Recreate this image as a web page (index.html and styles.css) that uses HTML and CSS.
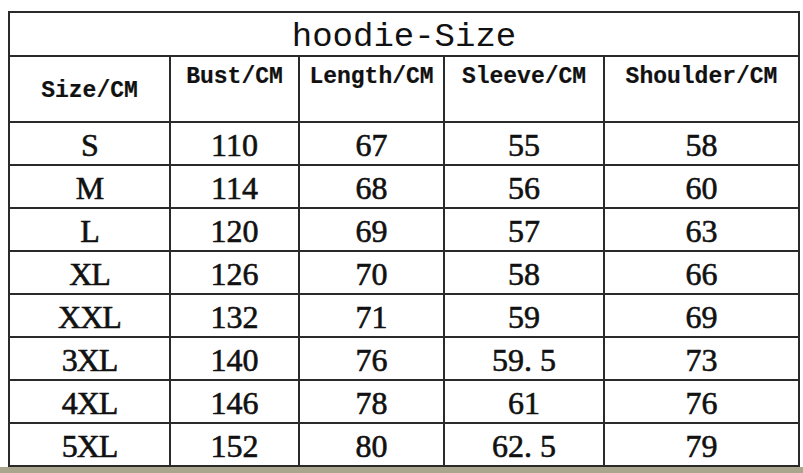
FILE: index.html
```html
<!DOCTYPE html>
<html>
<head>
<meta charset="utf-8">
<link rel="stylesheet" href="styles.css">
</head>
<body>
<div class="page">
  <table class="chart">
    <colgroup>
      <col class="c1"><col class="c2"><col class="c3"><col class="c4"><col class="c5">
    </colgroup>
    <tr class="title-row"><td colspan="5" class="title">hoodie-Size</td></tr>
    <tr class="head-row">
      <th class="head mid">Size/CM</th>
      <th class="head">Bust/CM</th>
      <th class="head">Length/CM</th>
      <th class="head">Sleeve/CM</th>
      <th class="head">Shoulder/CM</th>
    </tr>
    <tr><td class="size">S</td><td>110</td><td>67</td><td>55</td><td>58</td></tr>
    <tr><td class="size">M</td><td>114</td><td>68</td><td>56</td><td>60</td></tr>
    <tr><td class="size">L</td><td>120</td><td>69</td><td>57</td><td>63</td></tr>
    <tr><td class="size">XL</td><td>126</td><td>70</td><td>58</td><td>66</td></tr>
    <tr><td class="size">XXL</td><td>132</td><td>71</td><td>59</td><td>69</td></tr>
    <tr><td class="size">3XL</td><td>140</td><td>76</td><td>59. 5</td><td>73</td></tr>
    <tr><td class="size">4XL</td><td>146</td><td>78</td><td>61</td><td>76</td></tr>
    <tr><td class="size">5XL</td><td>152</td><td>80</td><td>62. 5</td><td>79</td></tr>
  </table>
  <div class="strip"></div>
</div>
</body>
</html>
```
FILE: styles.css
```css
html, body {
  margin: 0;
  padding: 0;
  background: #ffffff;
}
.page {
  width: 803px;
  height: 473px;
  overflow: hidden;
  padding-top: 11px;
  box-sizing: border-box;
  display: flex;
  flex-direction: column;
}
.chart {
  margin-left: 8px;
  width: 790px;
  border-collapse: collapse;
  table-layout: fixed;
  border: 2px solid #111;
  color: #111;
}
.c1 { width: 161px; }
.c2 { width: 129px; }
.c3 { width: 145px; }
.c4 { width: 160px; }
.c5 { width: 195px; }
.chart td, .chart th {
  border: 2px solid #2a2a2a;
  padding: 3px 0 0 0;
  text-align: center;
  vertical-align: middle;
  height: 38px;
  font-family: "Liberation Serif", "Times New Roman", serif;
  font-size: 32px;
  line-height: 32px;
  font-weight: normal;
  -webkit-text-stroke: 0.6px #111;
}
.chart td.size {
  letter-spacing: -1px;
}
.chart td.title {
  height: 37px;
  font-family: "Liberation Mono", "DejaVu Sans Mono", monospace;
  font-size: 34px;
  line-height: 34px;
  -webkit-text-stroke: 0;
  padding-top: 5px;
}
.chart th.head {
  height: 58px;
  font-family: "Liberation Mono", "DejaVu Sans Mono", monospace;
  font-size: 23px;
  line-height: 28px;
  font-weight: bold;
  -webkit-text-stroke: 0.2px #111;
  vertical-align: top;
  padding-top: 6px;
}
.chart th.head.mid {
  vertical-align: middle;
  padding-top: 4px;
  height: 60px;
}
.strip {
  margin-top: 0;
  height: 6px;
  background: #aaa68e;
}
```
